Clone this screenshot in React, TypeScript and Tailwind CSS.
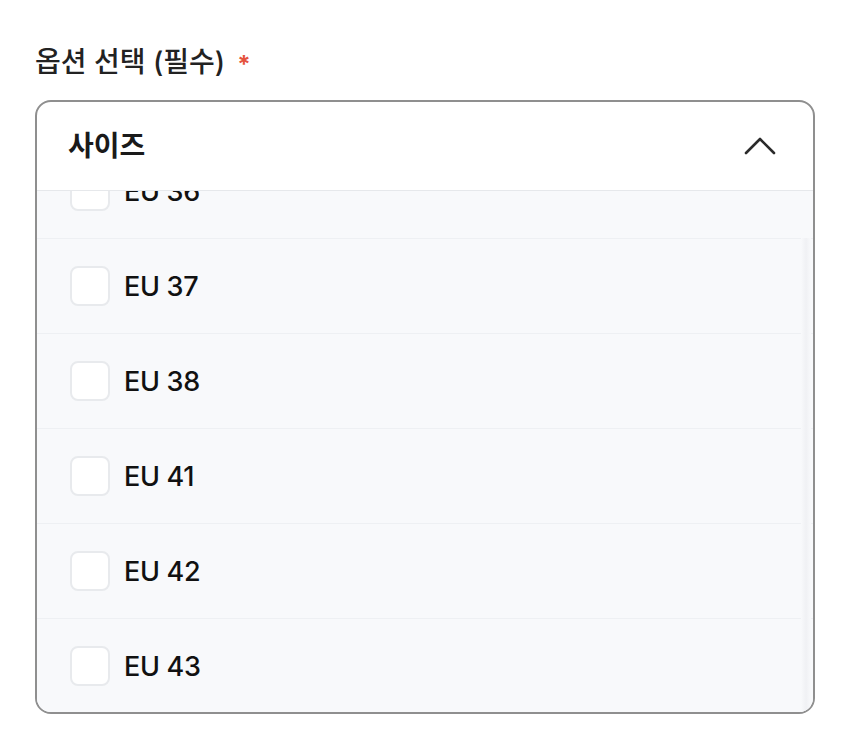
import React from "react";

const sizes = ["EU 36", "EU 37", "EU 38", "EU 41", "EU 42", "EU 43"];

export default function App() {
  return (
    <div
      className="w-[850px] h-[742px] bg-white px-[35px] pt-[44px]"
      style={{ fontFamily: 'Inter, "Noto Sans CJK KR", sans-serif' }}
    >
      <div className="flex items-center h-[36px] gap-[12px]">
        <span className="text-[28px] font-medium text-[#222] tracking-[0px]">
          옵션 선택 (필수)
        </span>
        <span className="text-[24px] font-bold text-[#e5533d] leading-none mt-[6px]">*</span>
      </div>

      <div className="mt-[20px] w-[780px] border-2 border-[#8f8f8f] rounded-[16px] overflow-hidden bg-white">
        <div className="h-[89px] flex items-center justify-between pl-[31px] pr-[37px] border-b border-[#e6e8eb]">
          <span className="text-[28px] font-bold text-[#1a1a1a] tracking-[0px]">사이즈</span>
          <svg width="32" height="18" viewBox="0 0 32 18" fill="none">
            <path
              d="M2 16 L16 2 L30 16"
              stroke="#2b2b2b"
              strokeWidth="2.6"
              strokeLinecap="round"
              strokeLinejoin="round"
            />
          </svg>
        </div>

        <div className="relative h-[521px] overflow-hidden bg-[#f8f9fb]">
          <div className="-mt-[47px]">
            {sizes.map((s) => (
              <div
                key={s}
                className="h-[95px] flex items-center gap-[14px] pl-[33px] border-b border-[#eef0f3]"
              >
                <div className="w-[40px] h-[40px] rounded-[8px] border-2 border-[#e8eaed] bg-white" />
                <span className="text-[27px] font-[450] text-[#111] tracking-[-0.3px] pt-[2px]">{s}</span>
              </div>
            ))}
          </div>
          <div className="absolute right-[2px] top-[47px] bottom-0 w-[10px] bg-gradient-to-r from-[#f8f9fb] via-[#f0f1f4] to-[#f8f9fb]" />
        </div>
      </div>
    </div>
  );
}
